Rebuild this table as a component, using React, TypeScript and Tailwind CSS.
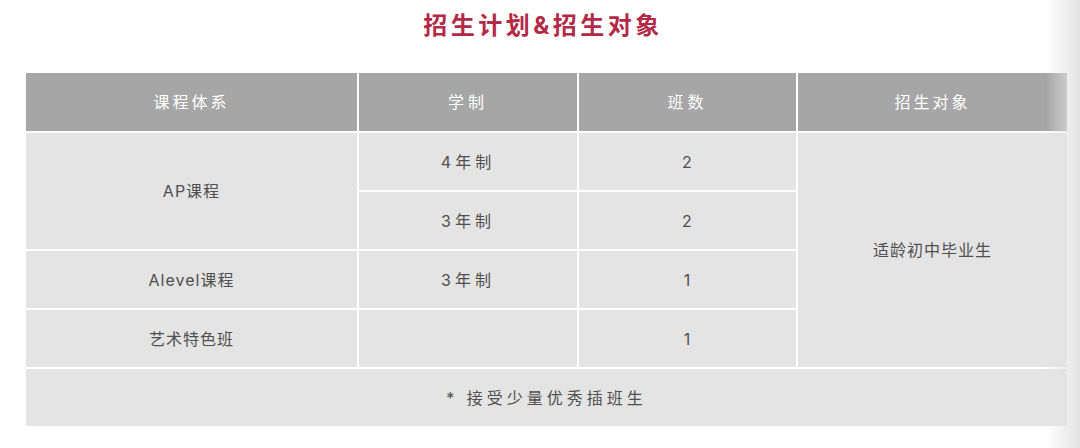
const cjk = "font-['Inter','Noto_Sans_CJK_SC',sans-serif]";

function Head({ children, spaced }: { children: React.ReactNode; spaced?: boolean }) {
  return (
    <div className={`flex items-center justify-center bg-[#a6a6a6] text-[16px] text-white ${spaced ? 'tracking-[4px]' : 'tracking-[3px]'}`}>
      {children}
    </div>
  );
}

function Cell({ children, className = '', spaced }: { children?: React.ReactNode; className?: string; spaced?: boolean }) {
  return (
    <div className={`flex items-center justify-center bg-[#e4e4e4] text-[16px] text-[#4f4f4f] ${spaced ? 'tracking-[4px]' : 'tracking-[1px]'} ${className}`}>
      {children}
    </div>
  );
}

export default function App() {
  return (
    <div className={`relative h-[448px] w-[1080px] overflow-hidden bg-white ${cjk}`}>
      {/* Title */}
      <div className="flex h-[73px] justify-center pt-[8px]">
        <h1 className="pl-[6px] text-[24px] font-bold leading-[36px] tracking-[3.5px] text-[#b32a48]">招生计划&amp;招生对象</h1>
      </div>

      {/* Table */}
      <div className="ml-[26px] grid w-[1041px] grid-cols-[331px_218px_217px_269px] grid-rows-[58px_57px_57px_57px_57px_57px] gap-[2px]">
        <Head>课程体系</Head>
        <Head spaced>学制</Head>
        <Head spaced>班数</Head>
        <Head>招生对象</Head>

        <Cell className="row-span-2">AP课程</Cell>
        <Cell spaced>4年制</Cell>
        <Cell>2</Cell>
        <Cell className="row-span-4">适龄初中毕业生</Cell>

        <Cell spaced>3年制</Cell>
        <Cell>2</Cell>

        <Cell>Alevel课程</Cell>
        <Cell spaced>3年制</Cell>
        <Cell>1</Cell>

        <Cell>艺术特色班</Cell>
        <Cell />
        <Cell>1</Cell>

        <Cell className="col-span-4" spaced>* 接受少量优秀插班生</Cell>
      </div>

      {/* right edge shadow */}
      <div className="pointer-events-none absolute right-0 top-0 h-full w-[34px] bg-gradient-to-r from-transparent to-[#e3e3e3]" />
    </div>
  );
}
